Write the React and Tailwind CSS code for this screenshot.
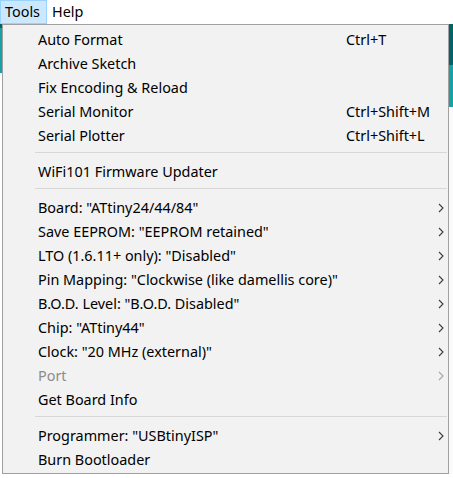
import React from 'react';

const groups = [
  [
    { label: 'Auto Format', shortcut: 'Ctrl+T' },
    { label: 'Archive Sketch' },
    { label: 'Fix Encoding & Reload' },
    { label: 'Serial Monitor', shortcut: 'Ctrl+Shift+M' },
    { label: 'Serial Plotter', shortcut: 'Ctrl+Shift+L' }
  ],
  [{ label: 'WiFi101 Firmware Updater' }],
  [
    { label: 'Board: "ATtiny24/44/84"', sub: true },
    { label: 'Save EEPROM: "EEPROM retained"', sub: true },
    { label: 'LTO (1.6.11+ only): "Disabled"', sub: true },
    { label: 'Pin Mapping: "Clockwise (like damellis core)"', sub: true },
    { label: 'B.O.D. Level: "B.O.D. Disabled"', sub: true },
    { label: 'Chip: "ATtiny44"', sub: true },
    { label: 'Clock: "20 MHz (external)"', sub: true },
    { label: 'Port', sub: true, disabled: true },
    { label: 'Get Board Info' }
  ],
  [
    { label: 'Programmer: "USBtinyISP"', sub: true },
    { label: 'Burn Bootloader' }
  ]
];

function Chevron({ disabled }) {
  return (
    <svg width="6" height="10" viewBox="0 0 6 10" className="block">
      <polyline
        points="1,1 5,5 1,9"
        fill="none"
        stroke={disabled ? '#a6a6a6' : '#3c3c3c'}
        strokeWidth="1.1"
      />
    </svg>
  );
}

function MenuItem({ item }) {
  return (
    <div className="h-6 flex items-center pl-[35px] pr-[4px]">
      <span className={`flex-1 whitespace-nowrap ${item.disabled ? 'text-[#8d8d8d]' : 'text-black'}`}>
        {item.label}
      </span>
      {item.shortcut && (
        <span className="w-[98px] whitespace-nowrap text-black">{item.shortcut}</span>
      )}
      {item.sub && <Chevron disabled={item.disabled} />}
    </div>
  );
}

export default function App() {
  return (
    <div
      className="w-[453px] h-[478px] bg-white overflow-hidden text-[14.4px] leading-none"
      style={{ fontFamily: '"Noto Sans", "Open Sans", sans-serif' }}
    >
      {/* menu bar */}
      <div className="h-6 flex items-stretch">
        <div className="w-[47px] bg-[#cce8ff] border border-[#99d1ff] flex items-center pl-[4px]">
          Tools
        </div>
        <div className="flex items-center pl-[5px]">Help</div>
      </div>

      <div className="flex h-[450px]">
        {/* app behind, left edge */}
        <div className="w-[2px] flex flex-col">
          <div className="h-[4px] bg-[#006468]"></div>
          <div className="h-[45px] bg-[#17a1a5]"></div>
          <div className="flex-1 bg-white"></div>
        </div>

        {/* dropdown */}
        <div className="w-[447px] border border-[#a0a0a0] bg-[#f2f2f2] pt-[3px]">
          {groups.map((group, gi) => (
            <div key={gi}>
              {gi > 0 && (
                <div className="h-3 pt-[4px] pl-[32px] pr-[1px]">
                  <div className="h-px bg-[#d7d7d7]"></div>
                </div>
              )}
              {group.map((item) => (
                <MenuItem key={item.label} item={item} />
              ))}
            </div>
          ))}
        </div>

        {/* app behind, right edge */}
        <div className="flex-1 flex flex-col">
          <div className="h-[41px] bg-[#006468]"></div>
          <div className="h-[42px] bg-[#17a1a5]"></div>
          <div className="flex-1 bg-[#fafafa]"></div>
        </div>
      </div>
    </div>
  );
}
